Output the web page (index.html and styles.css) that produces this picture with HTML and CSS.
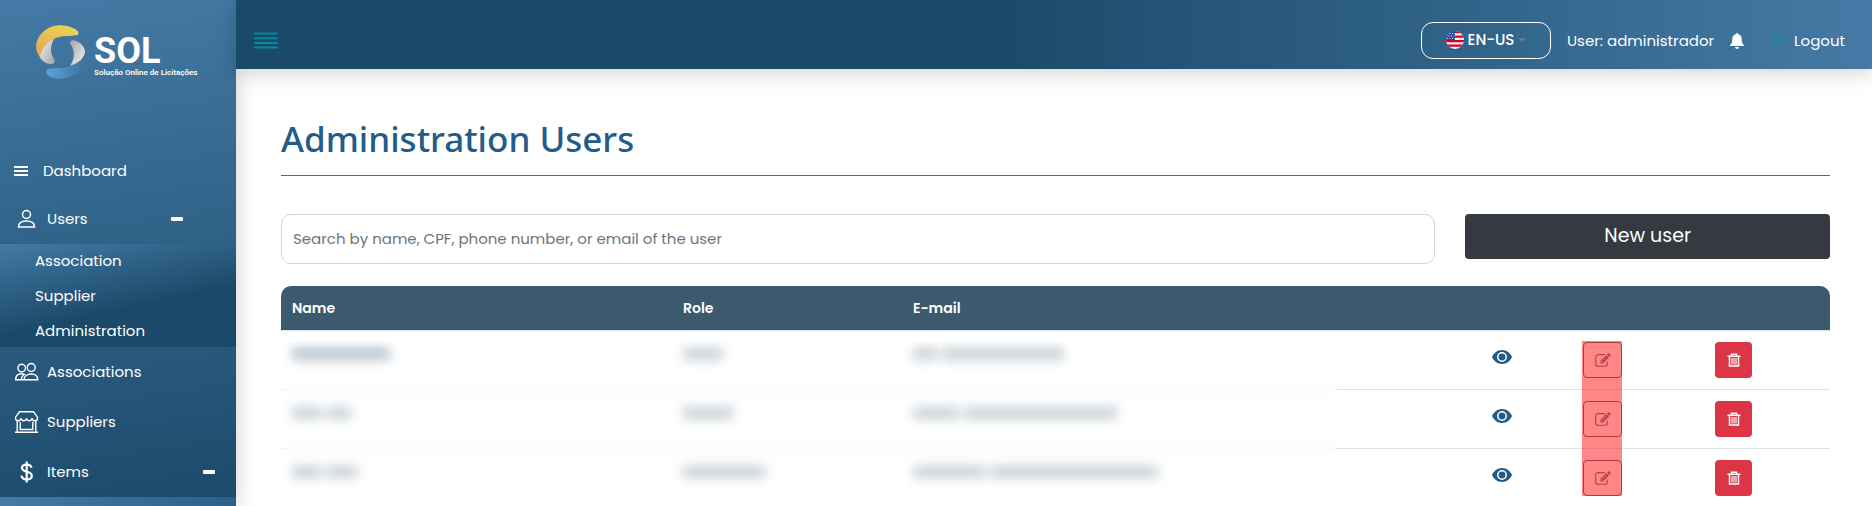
FILE: index.html
```html
<!DOCTYPE html>
<html lang="en">
<head>
<meta charset="utf-8">
<title>Administration Users</title>
<link rel="stylesheet" href="styles.css">
</head>
<body>
<svg class="sprite" aria-hidden="true">
  <symbol id="eye" viewBox="0 0 20 14"><path fill="currentColor" d="M10 0C5.500 0 1.800 2.800 0 7c1.800 4.200 5.500 7 10 7s8.200-2.800 10-7C18.200 2.800 14.500 0 10 0z"/><circle cx="10" cy="7" r="4.200" fill="currentColor" stroke="#fff" stroke-width="1.500"/></symbol>
  <symbol id="edit" viewBox="0 0 16 14"><path fill="none" stroke="currentColor" stroke-width="1.100" d="M10 1.600H3A2.300 2.300 0 0 0 .7 3.900v7A2.300 2.300 0 0 0 3 13.200h7a2.300 2.300 0 0 0 2.300-2.300V8.500"/><path fill="currentColor" d="M5.500 10.500V7.800l5.800-5.900 2.700 2.700-5.900 5.900zM12 1.300l.8-.8c.4-.4 1-.4 1.400 0l1.200 1.200c.4.4.4 1 0 1.400l-.8.8z"/><path stroke="#fff" stroke-width=".7" d="M7.500 7.800 11.500 3.800M6.300 8.300l1.500 1.500"/></symbol>
  <symbol id="trash" viewBox="0 0 14 14"><path fill="none" stroke="currentColor" stroke-width="1.500" d="M.5 3.200h13M4.500 3V1.200h5V3M2.500 3.200v9.900h9V3.200"/><path stroke="currentColor" stroke-width="1.100" d="M5 5v6.500M7 5v6.500M9 5v6.500"/></symbol>
</svg>
<div class="layout">
  <aside class="sidebar">
    <a class="brand" href="#">
      <svg class="brand-mark" viewBox="0 0 50 54" aria-hidden="true">
        <defs>
          <linearGradient id="gold" x1="0" y1="1" x2="1" y2="0"><stop offset="0" stop-color="#e2a94f"/><stop offset="1" stop-color="#ecd95a"/></linearGradient>
          <linearGradient id="silver" x1="0" y1="0" x2="1" y2="1"><stop offset="0" stop-color="#f4f4f6"/><stop offset="1" stop-color="#a3a4aa"/></linearGradient>
          <linearGradient id="silver2" x1="0" y1="0" x2="1" y2="1"><stop offset="0" stop-color="#a3a4aa"/><stop offset="1" stop-color="#f4f4f6"/></linearGradient>
          <linearGradient id="azure" x1="0" y1="0" x2="1" y2="0"><stop offset="0" stop-color="#5ba3dc"/><stop offset="1" stop-color="#3c719b"/></linearGradient>
        </defs>
        <path fill="url(#silver)" d="M3 30C4 21 9 15 18 14c-4 7-4 14 0 20 2 3-1 6-4 5-6-1-9-4-11-9z"/>
        <path fill="url(#gold)" d="M4 32C-2 25-1 15 6 8 13 0 26-2 37 3c5 2 6 4 5 7l-8 1C20 10 7 17 4 32z"/>
        <path fill="url(#azure)" d="M50 25c1 9-3 19-10 24-8 5-18 6-25 3-5-2-6-6-3-8l7-1c17 1 28-5 31-18z"/>
        <path fill="url(#silver2)" d="M34 41c5-8 5-15 1-21-2-4 1-6 5-4 6 2 9 7 9 11-1 6-6 11-15 14z"/>
      </svg>
      <span class="brand-text"><span class="brand-name">SOL</span><span class="brand-tag">Solução Online de Licitações</span></span>
    </a>
    <nav class="nav">
      <a class="nav-link nav-link-compact" href="#">
        <svg width="14" height="12" viewBox="0 0 14 12" aria-hidden="true"><path stroke="#fff" stroke-width="2" d="M0 2h14M0 6h14M0 10h14"/></svg>
        <span>Dashboard</span>
      </a>
      <a class="nav-link nav-link-nested" href="#">
        <svg width="24" height="20" viewBox="0 0 24 20" fill="none" stroke="#fff" stroke-width="1.500" aria-hidden="true"><circle cx="11.500" cy="5.500" r="4"/><path d="M3.500 18c0-4 3.500-6 8-6s8 2 8 6z"/></svg>
        <span>Users</span><i class="minus"></i>
      </a>
      <div class="submenu">
        <a href="#">Association</a>
        <a href="#">Supplier</a>
        <a href="#">Administration</a>
      </div>
      <a class="nav-link" href="#">
        <svg width="24" height="20" viewBox="0 0 24 20" fill="none" stroke="#fff" stroke-width="1.400" aria-hidden="true"><circle cx="6.700" cy="6" r="3.800"/><circle cx="16.200" cy="5.500" r="4"/><path d="M9 17.800c0-3.800 3-5.800 7-5.800s6.800 2 6.800 5.800zM9 17.800H.7c0-3.800 2.200-6 5.600-6 1.500 0 2.500.2 3.700.8M8.500 13c-1.500 1.400-2.300 3-2.300 4.800"/></svg>
        <span>Associations</span>
      </a>
      <a class="nav-link" href="#">
        <svg width="24" height="22" viewBox="0 0 24 22" fill="none" stroke="#fff" stroke-width="1.400" aria-hidden="true"><path d="M4.500.8h14l4 5.400c.4 2-.8 3.600-2.700 3.600-1.600 0-2.500-1.200-2.700-2.500-.4 1.500-1.300 2.500-2.800 2.500s-2.500-1-2.800-2.500c-.3 1.500-1.300 2.500-2.800 2.500S6.300 8.800 5.900 7.300c-.3 1.400-1.200 2.500-2.700 2.500C1.300 9.800.1 8.200.5 6.200zM2.200 10v11M20.800 10v11M0 21.200h23M5.200 11v7.500h12.600V11"/></svg>
        <span>Suppliers</span>
      </a>
      <a class="nav-link" href="#">
        <svg width="24" height="22" viewBox="0 0 24 22" fill="none" stroke="#fff" stroke-width="2.200" aria-hidden="true"><path d="M16.500 6.800C16 4.600 14.300 3.600 11.700 3.600c-2.800 0-4.700 1.300-4.700 3.500 0 5 9.800 2.400 9.800 7.600 0 2.400-2.200 3.700-5 3.700-3 0-5-1.300-5.300-3.800M11.700.5v21"/></svg>
        <span>Items</span><i class="minus"></i>
      </a>
      <div class="submenu submenu-rest"></div>
    </nav>
  </aside>
  <div class="page">
    <header class="topbar">
      <button class="menu-toggle" type="button" aria-label="Toggle menu">
        <svg width="24" height="18" viewBox="0 0 24 18" aria-hidden="true"><path stroke="#028c9d" stroke-width="2" stroke-linecap="round" d="M1 1.500h22M1 6.200h22M1 10.900h22M1 15.600h22"/></svg>
      </button>
      <div class="topbar-tools">
        <button class="language" type="button">
          <svg width="18" height="18" viewBox="0 0 18 18" aria-hidden="true">
            <clipPath id="round"><circle cx="9" cy="9" r="9"/></clipPath>
            <g clip-path="url(#round)"><path fill="#f2f2f2" d="M0 0h18v18H0z"/><path stroke="#d80027" stroke-width="2.200" d="M0 1.100h18M0 5.600h18M0 10.100h18M0 14.600h18"/><path fill="#1e50a0" d="M0 0h9v9H0z"/><path stroke="#cfdcf0" stroke-width="1" stroke-dasharray="1 1.500" d="M1 2.500h8M0 5h9M1 7.500h8"/></g>
          </svg>
          <span>EN-US</span><i class="caret"></i>
        </button>
        <span class="user-name">User: administrador</span>
        <button class="bell" type="button" aria-label="Notifications">
          <svg width="14" height="16" viewBox="0 0 14 16" aria-hidden="true"><path fill="#fff" d="M7 0c.7 0 1 .4 1 1.100 2.400.6 3.700 2.400 3.700 4.900 0 3.500.8 4.800 2.300 6.300V13H0v-.7C1.500 10.800 2.300 9.500 2.300 6c0-2.500 1.300-4.300 3.700-4.900C6 .4 6.300 0 7 0zM5 14h4c-.2 1.300-1 2-2 2s-1.800-.7-2-2z"/></svg>
        </button>
        <a class="logout" href="#">
          <svg width="12" height="12" viewBox="0 0 12 12" fill="none" stroke="#028c9d" stroke-width="1.100" aria-hidden="true"><path d="M4.500 1h-3Q.8 1 .8 1.700v8.600q0 .7.700.7h3M4 6h7M8.500 3.200 11.200 6 8.500 8.800"/></svg>
          <span>Logout</span>
        </a>
      </div>
    </header>
    <main class="content">
      <h1>Administration Users</h1>
      <div class="toolbar">
        <input class="search" type="text" aria-label="Search users" placeholder="Search by name, CPF, phone number, or email of the user">
        <button class="new-user" type="button">New user</button>
      </div>
      <div class="table-wrap">
        <table>
          <colgroup><col class="col-name"><col class="col-role"><col><col class="col-view"><col class="col-edit"><col class="col-delete"></colgroup>
          <thead><tr><th>Name</th><th>Role</th><th>E-mail</th><th></th><th></th><th></th></tr></thead>
          <tbody>
            <tr>
              <td><i class="mask strong" style="width:98px"></i></td>
              <td><i class="mask" style="width:40px"></i></td>
              <td><i class="mask" style="width:24px"></i><i class="mask" style="width:122px"></i></td>
              <td class="action"><a class="view" href="#" aria-label="View"><svg width="20" height="14"><use href="#eye"/></svg></a></td>
              <td class="action"><button class="btn edit" type="button" aria-label="Edit"><svg width="16" height="14"><use href="#edit"/></svg></button></td>
              <td class="action"><button class="btn delete" type="button" aria-label="Delete"><svg width="14" height="14"><use href="#trash"/></svg></button></td>
            </tr>
            <tr>
              <td><i class="mask" style="width:30px"></i><i class="mask" style="width:24px"></i></td>
              <td><i class="mask" style="width:50px"></i></td>
              <td><i class="mask" style="width:46px"></i><i class="mask" style="width:153px"></i></td>
              <td class="action"><a class="view" href="#" aria-label="View"><svg width="20" height="14"><use href="#eye"/></svg></a></td>
              <td class="action"><button class="btn edit" type="button" aria-label="Edit"><svg width="16" height="14"><use href="#edit"/></svg></button></td>
              <td class="action"><button class="btn delete" type="button" aria-label="Delete"><svg width="14" height="14"><use href="#trash"/></svg></button></td>
            </tr>
            <tr>
              <td><i class="mask" style="width:30px"></i><i class="mask" style="width:30px"></i></td>
              <td><i class="mask" style="width:82px"></i></td>
              <td><i class="mask" style="width:72px"></i><i class="mask" style="width:168px"></i></td>
              <td class="action"><a class="view" href="#" aria-label="View"><svg width="20" height="14"><use href="#eye"/></svg></a></td>
              <td class="action"><button class="btn edit" type="button" aria-label="Edit"><svg width="16" height="14"><use href="#edit"/></svg></button></td>
              <td class="action"><button class="btn delete" type="button" aria-label="Delete"><svg width="14" height="14"><use href="#trash"/></svg></button></td>
            </tr>
          </tbody>
        </table>
        <div class="veil"></div>
        <div class="highlight"></div>
      </div>
    </main>
  </div>
</div>
</body>
</html>
```

FILE: styles.css
```css
* { box-sizing: border-box; }
body { margin: 0; font: 15px/24px Poppins, Inter, sans-serif; color: #212529; background: #fff; }
a { color: inherit; text-decoration: none; }
button { font: inherit; color: inherit; cursor: pointer; }
svg { display: block; flex: none; }
.sprite { position: absolute; width: 0; height: 0; }

.layout { display: flex; min-height: 100vh; }

.sidebar {
  display: flex; flex-direction: column; flex: none; width: 236px; color: #fff;
  background: linear-gradient(172deg, #447aa5, #1b4969);
  box-shadow: 0 0 20px rgba(0, 0, 0, .2);
}
.brand { display: flex; align-items: flex-start; gap: 8px; height: 147px; padding: 25px 0 0 36px; }
.brand-mark { width: 50px; height: 54px; }
.brand-text { display: flex; flex-direction: column; padding-top: 10px; white-space: nowrap; }
.brand-name { font: 700 36px/32px Roboto, sans-serif; }
.brand-tag { font: 600 8px/12px Roboto, sans-serif; }

.nav { display: flex; flex-direction: column; flex: 1; }
.nav-link { display: flex; align-items: center; gap: 8px; height: 50px; padding: 0 21px 0 15px; }
.nav-link-compact { gap: 15px; height: 48px; padding-left: 14px; }
.nav-link-nested { height: 49px; padding-right: 53px; padding-bottom: 2px; }
.minus { width: 12px; height: 4px; margin-left: auto; border-radius: 1px; background: #fff; }
.submenu { display: flex; flex-direction: column; gap: 1px; background: linear-gradient(168deg, #447aa5, #1b4969 60%); }
.submenu a { padding: 5px 35px; }
.submenu a:last-child { padding-bottom: 4px; }
.submenu-rest { flex: 1; background: linear-gradient(90deg, #447aa5, #2d6088); }

.page { flex: 1; min-width: 0; }
.topbar {
  display: flex; align-items: center; justify-content: space-between; height: 69px; padding: 12px 27px 0 18px; color: #fff;
  background: linear-gradient(90deg, #1b4969 46%, #447aa5);
  box-shadow: 0 4px 20px rgba(0, 0, 0, .18);
}
.menu-toggle, .bell { padding: 0; border: 0; background: none; }
.topbar-tools { display: flex; align-items: center; gap: 16px; }
.language {
  display: flex; align-items: center; justify-content: center; gap: 4px; width: 130px; height: 37px; padding: 0 0 1px;
  border: 1px solid #fff; border-radius: 12px; background: none; font-weight: 500;
}
.caret { border: 4px solid transparent; border-top-color: #65798a; border-bottom: 0; }
.logout { display: flex; align-items: center; gap: 8px; margin-left: 14px; }

.content { padding: 45px 42px 0 45px; }
h1 { margin: 0; padding: 0 0 12px; border-bottom: 1px solid #007bff; color: #235c88; font: 500 35px/49px "Noto Sans", sans-serif; }
.toolbar { display: grid; grid-template-columns: 19fr 6fr; gap: 30px; align-items: start; margin-top: 38px; }
.search { width: 100%; height: 50px; padding: 0 11px 2px; border: 1px solid #ced4da; border-radius: 10px; font: inherit; background: #fff; }
.search::placeholder { color: #6c757d; opacity: 1; }
.new-user { height: 45px; padding: 0 0 2px; border: 0; border-radius: 4px; background: #343a40; color: #fff; font-size: 19px; }

.table-wrap { position: relative; margin-top: 22px; }
table { width: 100%; table-layout: fixed; border-spacing: 0; }
.col-name { width: 391px; }
.col-role { width: 230px; }
.col-view { width: 132px; }
.col-edit { width: 69px; }
.col-delete { width: 193px; }
th { height: 45px; padding: 0 11px; border-bottom: 1px solid #dee2e6; background: #3b5a6e; color: #fff; font-size: 14px; font-weight: 600; text-align: left; }
th:first-child { border-top-left-radius: 10px; }
th:last-child { border-top-right-radius: 10px; }
td { height: 59px; padding: 11px 11px 0; border-bottom: 1px solid #dee2e6; vertical-align: top; }
tr:last-child td { border-bottom: 0; }
.action { padding: 11px 0 0; }
.action > * { margin: 0 auto; }
.mask { display: inline-block; height: 12px; margin: 6px 5px 0 0; background: #c6d0d6; }
.mask.strong { background: #b4c2cd; }
.view { display: block; width: 20px; padding-top: 8px; color: #235c88; }
.btn { display: flex; align-items: center; justify-content: center; height: 36px; padding: 0; border-radius: 4px; }
.edit { width: 39px; border: 1px solid #5f6368; background: #fff; color: #6c757d; }
.delete { width: 37px; border: 0; background: #dc3545; color: #fff; }
.veil { position: absolute; top: 55px; left: 1px; right: 493px; height: 150px; backdrop-filter: blur(6px); }
.highlight { position: absolute; top: 55px; right: 208px; width: 40px; height: 155px; background: rgba(255, 16, 16, .5); pointer-events: none; }
```
